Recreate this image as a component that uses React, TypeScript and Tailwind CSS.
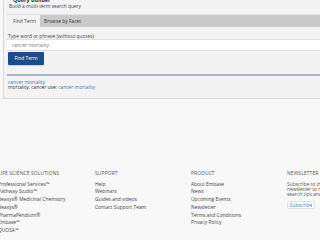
import React from 'react';

const footerCols = [
  {
    title: 'LIFE SCIENCE SOLUTIONS',
    width: 'w-[97px]',
    items: ['Professional Services™', 'Pathway Studio™', 'Reaxys® Medicinal Chemistry', 'Reaxys®', 'PharmaPendium®', 'Embase™', 'QUOSA™'],
  },
  {
    title: 'SUPPORT',
    width: 'w-[96px]',
    items: ['Help', 'Webinars', 'Guides and videos', 'Contact Support Team'],
  },
  {
    title: 'PRODUCT',
    width: 'w-[96px]',
    items: ['About Embase', 'News', 'Upcoming Events', 'Newsletter', 'Terms and Conditions', 'Privacy Policy'],
  },
];

export default function App() {
  return (
    <div className="w-[320px] h-[240px] overflow-hidden bg-[#f8f8f8] text-[#3c3c3c] font-['Open_Sans',sans-serif] text-[4.9px]">
      {/* query builder panel */}
      <div className="ml-[3px] mt-[-3px] h-[102px] bg-[#f3f3f3] border-l border-b border-[#d8d8d8] whitespace-nowrap">
        <div className="pl-[9px] text-[5.4px] font-bold leading-[6px] text-[#333]">Query Builder</div>
        <div className="pl-[5px] pt-[0.5px] leading-[5px] text-[#444]">Build a multi-term search query</div>

        <div className="mt-[5.5px] ml-[3px] flex h-[13px] bg-[#c8cacb] border-t border-[#e2e2e2]">
          <div className="w-[33px] bg-[#f3f3f3] leading-[12px] pl-[6px] text-[#444]">Find Term</div>
          <div className="pl-[4px] leading-[12px] text-[#333]">Browse by Facet</div>
        </div>

        <div className="pl-[4px] pt-[6px] leading-[6px] text-[#444]">Type word or phrase (without quotes)</div>
        <div className="ml-[3px] h-[12px] bg-white border-y border-[#e0e0e0] pl-[5px] leading-[10px] text-[#777]">cancer mortality</div>
        <div className="mt-[1px] ml-[4px] w-[36px] h-[13px] bg-[#1c4c8c] rounded-[1px] text-white leading-[13px] text-center shadow-[0_1px_1px_rgba(0,0,0,0.15)]">Find Term</div>

        <div className="mt-[9px] ml-[3px] h-[2px] bg-[#a9b4c6]" />
        <div className="pl-[4px] pt-[3px] leading-[6px] text-[#3a78b8]">cancer mortality</div>
        <div className="pl-[4px] leading-[5.5px] text-[#333]">
          mortality, cancer use: <span className="text-[#3a78b8]">cancer mortality</span>
        </div>
      </div>

      {/* footer */}
      <div className="mt-[71px] ml-[-2px] flex whitespace-nowrap">
        {footerCols.map((col) => (
          <div key={col.title} className={`${col.width} shrink-0`}>
            <div className="leading-[7px] tracking-[0.15px] text-[#555]">{col.title}</div>
            <div className="mt-[3.5px] flex flex-col">
              {col.items.map((it) => (
                <div key={it} className="leading-[7.8px] text-[#444]">{it}</div>
              ))}
            </div>
          </div>
        ))}
        <div className="w-[40px] shrink-0">
          <div className="leading-[7px] tracking-[0.15px] text-[#555]">NEWSLETTER</div>
          <div className="mt-[4.5px] leading-[5px] text-[#555]">
            <div>Subscribe to the</div>
            <div>newsletter to receive</div>
            <div>search tips and</div>
          </div>
          <div className="mt-[4.5px] w-[28px] h-[8px] bg-white border border-[#e3e3e3] rounded-[1px] leading-[6px] text-center text-[#3a78b8]">Subscribe</div>
        </div>
      </div>
    </div>
  );
}
